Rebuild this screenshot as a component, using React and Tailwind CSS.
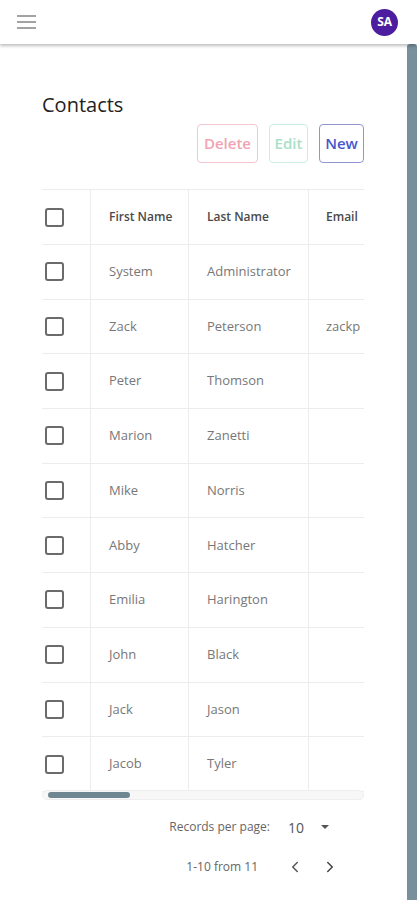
import { ChevronLeft, ChevronRight } from 'lucide-react';

const rows = [
  ['System', 'Administrator', ''],
  ['Zack', 'Peterson', 'zackp'],
  ['Peter', 'Thomson', ''],
  ['Marion', 'Zanetti', ''],
  ['Mike', 'Norris', ''],
  ['Abby', 'Hatcher', ''],
  ['Emilia', 'Harington', ''],
  ['John', 'Black', ''],
  ['Jack', 'Jason', ''],
  ['Jacob', 'Tyler', '']
];

function Checkbox() {
  return <div className="h-[19px] w-[19px] rounded-[3px] border-2 border-[#6b6b6b]" />;
}

function Row({ first, last, email, header }) {
  const text = header ? 'text-[12px] font-semibold text-[#4a4a4a]' : 'text-[13px] text-[#777]';
  return (
    <div className={`flex border-b border-[#ececec] ${header ? 'h-[56px] border-t' : 'h-[54.7px]'}`}>
      <div className="flex w-[49px] shrink-0 items-center border-r border-[#ececec] pl-[3px]">
        <Checkbox />
      </div>
      <div className={`flex w-[98px] shrink-0 items-center border-r border-[#ececec] pl-[18px] ${text}`}>{first}</div>
      <div className={`flex w-[120px] shrink-0 items-center border-r border-[#ececec] pl-[18px] ${text}`}>{last}</div>
      <div className={`flex w-[200px] shrink-0 items-center whitespace-nowrap pl-[17px] ${text}`}>{email}</div>
    </div>
  );
}

export default function App() {
  return (
    <div className="flex h-[900px] w-[417px] flex-col overflow-hidden bg-white" style={{ fontFamily: '"Open Sans", "Noto Sans", sans-serif' }}>
      <header className="relative z-10 flex h-[44px] shrink-0 items-center justify-between bg-white pl-[17px] pr-[19px] shadow-[0_2px_3px_rgba(0,0,0,0.25)]">
        <div className="flex w-[19px] flex-col gap-[4px]">
          <span className="h-[2px] bg-[#a3a3a3]" />
          <span className="h-[2px] bg-[#a3a3a3]" />
          <span className="h-[2px] bg-[#a3a3a3]" />
        </div>
        <div className="flex h-[27px] w-[27px] items-center justify-center rounded-full bg-[#4c1d9e] text-[12px] font-bold tracking-tight text-white">
          SA
        </div>
      </header>

      <div className="flex min-h-0 flex-1">
        <main className="w-[407px] shrink-0 pl-[42px] pr-[43px] pt-[48px]">
          <h1 className="text-[20px] leading-[26px] text-[#222]">Contacts</h1>
          <div className="mt-[6px] flex justify-end gap-[11px]">
            <button className="h-[39px] w-[61px] rounded-[4px] border border-[#f2c6cf] text-[15px] font-semibold text-[#f0a3b3]">Delete</button>
            <button className="h-[39px] w-[39px] rounded-[4px] border border-[#cdeedf] text-[15px] font-semibold text-[#a9e0c7]">Edit</button>
            <button className="h-[39px] w-[45px] rounded-[4px] border border-[#9096cf] text-[15px] font-semibold text-[#4657cf]">New</button>
          </div>

          <div className="mt-[26px] overflow-hidden">
            <Row header first="First Name" last="Last Name" email="Email" />
            {rows.map(([f, l, e]) => (
              <Row key={f} first={f} last={l} email={e} />
            ))}
          </div>
          <div className="mt-[-2px] h-[10px] rounded-full border border-[#eeeeee] bg-[#f7f7f7] px-[5px] py-[1px]">
            <div className="h-[6px] w-[82px] rounded-full bg-[#6e8792]" />
          </div>

          <div className="mt-[17px] flex items-center justify-end pr-[35px] text-[12px] text-[#666]">
            <span>Records per page:</span>
            <span className="ml-[18px] text-[14px] text-[#555]">10</span>
            <span className="ml-[17px] h-0 w-0 border-x-[4px] border-t-[4px] border-x-transparent border-t-[#555]" />
          </div>
          <div className="mt-[20px] flex items-center justify-end pr-[25px] text-[12px] text-[#666]">
            <span>1-10 from 11</span>
            <ChevronLeft className="ml-[28px] h-[18px] w-[18px] text-[#555]" strokeWidth={2} />
            <ChevronRight className="ml-[17px] h-[18px] w-[18px] text-[#444]" strokeWidth={2} />
          </div>
        </main>
        <div className="w-[10px] shrink-0 rounded-t-[3px] bg-[#78909c]" />
      </div>
    </div>
  );
}
